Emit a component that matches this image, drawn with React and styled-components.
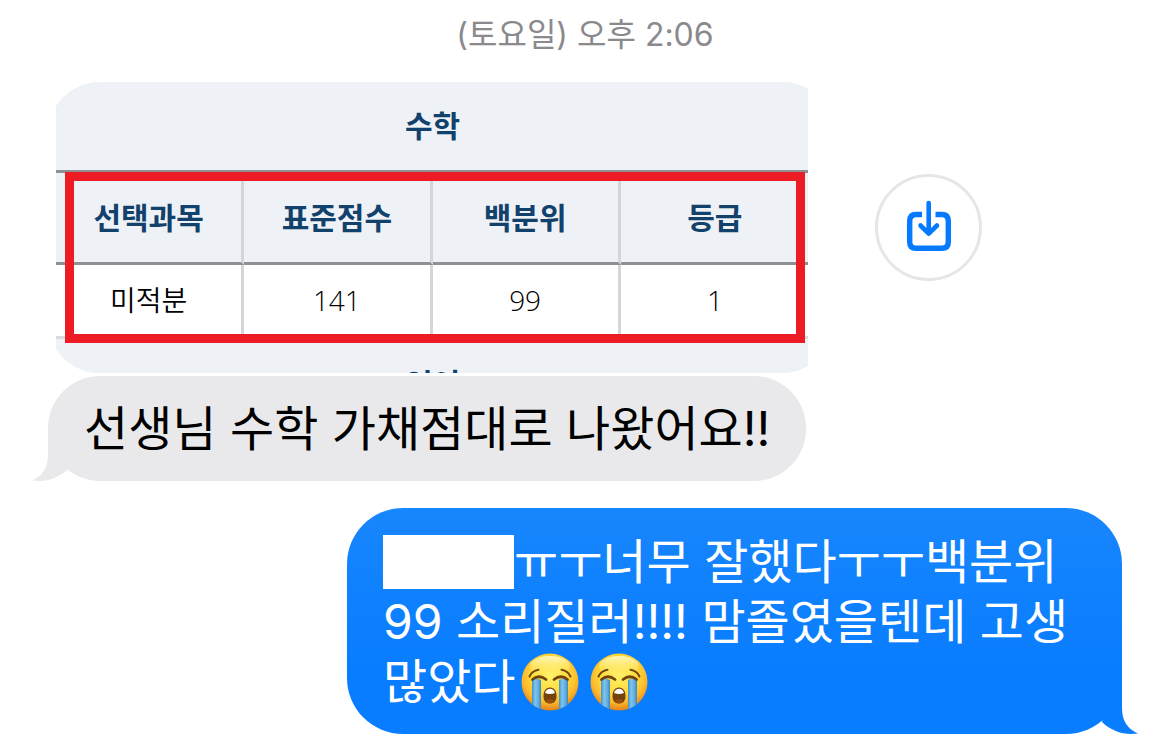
import React from 'react';
import styled, { createGlobalStyle } from 'styled-components';

const GlobalStyle = createGlobalStyle`
    * {
        box-sizing: border-box;
    }

    body {
        margin: 0;
        background: #fff;
        font-family: Inter, "Noto Sans CJK KR", sans-serif;
    }
`;

const Thread = styled.main`
    display: flex;
    flex-direction: column;
    padding: 12px 48px 0;
`;

const TimeStamp = styled.time`
    align-self: center;
    margin-bottom: 24px;
    color: #8a8a8d;
    font-size: 32px;
    line-height: 46px;
`;

const AttachmentRow = styled.div`
    display: flex;
    align-items: center;
    gap: 67px;
    padding-left: 8px;
    margin-bottom: 3px;
`;

const Attachment = styled.figure`
    position: relative;
    flex: 0 1 752px;
    margin: 0;
    overflow: hidden;
`;

// the rounded sheet is wider than the attachment, so its corners get cut off
const Sheet = styled.div`
    height: 291px;
    margin: 0 -26px 0 -8px;
    padding: 0 25px 0 8px;
    border-radius: 52px;
    background: #eef2f7;
    overflow: hidden;
`;

const ScoreTable = styled.table`
    width: 100%;
    table-layout: fixed;
    border-collapse: separate;
    border-spacing: 0;
    font-family: "Open Sans", "Noto Sans CJK KR", sans-serif;
    text-align: center;
`;

const HeadCell = styled.th`
    height: ${props => props.$height};
    padding: 0;
    background: #eef2f7;
    border-bottom: 3px solid #8e9194;
    border-right: ${props => props.$divided ? "3px solid #d3d5d8" : "0"};
    color: #12416b;
    font-size: 30px;
    font-weight: 700;
    line-height: 44px;
`;

const NextSubject = styled(HeadCell)`
    border-bottom: 0;
`;

const ScoreCell = styled.td`
    height: 74px;
    padding: 0 0 2px;
    background: #fff;
    border-bottom: 3px solid #d9dadc;
    border-right: ${props => props.$divided ? "3px solid #d3d5d8" : "0"};
    color: #000;
    font-size: 28px;
    font-weight: 350;
    line-height: 40px;
`;

const Highlight = styled.div`
    position: absolute;
    top: 90px;
    bottom: 30px;
    left: 9px;
    right: 3px;
    border: 9px solid #ed1c24;
`;

const SaveButton = styled.button`
    display: flex;
    align-items: center;
    justify-content: center;
    flex: none;
    width: 107px;
    height: 107px;
    padding: 0 0 4px;
    border: 3px solid #e6e6e8;
    border-radius: 50%;
    background: #fff;
    cursor: pointer;
`;

const Bubble = styled.div`
    position: relative;
    align-self: ${props => props.$sent ? "flex-end" : "flex-start"};
    max-width: 775px;
    margin-bottom: 27px;
    padding: ${props => props.$sent ? "24px 36px 22px" : "23px 36px 22px"};
    border-radius: ${props => props.$sent ? "56px" : "52px"};
    background: ${props => props.$sent ? "linear-gradient(#1886fd, #087dff 72%)" : "#e9e9eb"};
    color: ${props => props.$sent ? "#fff" : "#000"};
    font-size: 48px;
    line-height: 60px;
    word-break: keep-all;
`;

const BubbleText = styled.p`
    margin: 0;
`;

const Tail = styled.svg`
    position: absolute;
    bottom: 0;
    left: ${props => props.$sent ? "auto" : "-16px"};
    right: ${props => props.$sent ? "-16px" : "auto"};
    width: 36px;
    height: 60px;
    transform: ${props => props.$sent ? "scaleX(-1)" : "none"};
    fill: ${props => props.$sent ? "#087dff" : "#e9e9eb"};
`;

const HiddenName = styled.span`
    display: inline-block;
    width: 131px;
    height: 54px;
    margin: -14px 0 -6px;
    background: #fff;
    vertical-align: middle;
`;

const Emoji = styled.svg`
    width: 58px;
    height: 58px;
    margin: -14px 5px -6px 6px;
    vertical-align: middle;
`;

const BubbleTail = ({ $sent }) => (
    <Tail $sent={$sent} viewBox="0 0 36 60" aria-hidden="true">
        <path d={$sent
            ? "M16 2V34C16 46 11 55 0 59.500C14 61.500 27 57 36 48L30 22Z"
            : "M16 8V34C16 46 11 55 0 59.500C14 61.500 27 57 36 48L30 22Z"} />
    </Tail>
);

const SaveIcon = () => (
    <svg width="44" height="52" viewBox="0 0 44 52" fill="none" stroke="#067aff" aria-hidden="true">
        <path d="M15 14.500H9Q2.700 14.500 2.700 21V42Q2.700 48.300 9 48.300H35Q41.300 48.300 41.300 42V21Q41.300 14.500 35 14.500H28.500" strokeWidth="5.400" />
        <path d="M21.700 3V33M13.500 25.500L21.700 33.700L30 25.500" strokeWidth="4.600" strokeLinecap="round" strokeLinejoin="round" />
    </svg>
);

const CryingFace = ({ id }) => (
    <Emoji viewBox="0 0 58 58" role="img" aria-label="😭">
        <defs>
            <radialGradient id={`${id}-face`} cx="50%" cy="38%" r="62%">
                <stop offset="0" stopColor="#fff06a" />
                <stop offset="0.500" stopColor="#ffdc3c" />
                <stop offset="0.780" stopColor="#fbb92b" />
                <stop offset="1" stopColor="#e5801c" />
            </radialGradient>
            <linearGradient id={`${id}-shine`} x1="0" y1="0" x2="0" y2="1">
                <stop offset="0" stopColor="#fffbd0" stopOpacity="0.900" />
                <stop offset="1" stopColor="#ffe95c" stopOpacity="0" />
            </linearGradient>
            <linearGradient id={`${id}-tear`} x1="0" y1="0" x2="1" y2="0">
                <stop offset="0" stopColor="#3f93cf" />
                <stop offset="0.350" stopColor="#7fc4ee" />
                <stop offset="0.700" stopColor="#62afe0" />
                <stop offset="1" stopColor="#3f85ba" />
            </linearGradient>
            <clipPath id={`${id}-clip`}>
                <circle cx="29" cy="29" r="28.500" />
            </clipPath>
        </defs>
        <circle cx="29" cy="29" r="28.500" fill={`url(#${id}-face)`} />
        <ellipse cx="29" cy="13" rx="20" ry="10" fill={`url(#${id}-shine)`} />
        <g clipPath={`url(#${id}-clip)`}>
            <path d="M11 27Q15 24 20 27V58H11Z" fill={`url(#${id}-tear)`} />
            <path d="M38 27Q43 24 47 27V58H38Z" fill={`url(#${id}-tear)`} />
        </g>
        <g fill="none" stroke="#70450d" strokeLinecap="round">
            <path d="M8.500 23.500Q11 18 17.500 16.800M49.500 23.500Q47 18 40.500 16.800" strokeWidth="2" />
            <path d="M11.500 26.500Q18 21 25 26.500M33 26.500Q40 21 46.500 26.500" strokeWidth="2.800" />
        </g>
        <path d="M29 34.500C33 34.500 35.500 38 35.500 43C35.500 48 33 50.500 29 50.500S22.500 48 22.500 43C22.500 38 25 34.500 29 34.500Z" fill="#75410d" />
        <path d="M24 40Q25.500 35.800 29 35.800T34 40Q29 42 24 40Z" fill="#fff" />
        <ellipse cx="29" cy="48" rx="4" ry="2" fill="#95500f" />
    </Emoji>
);

const subjects = [
    { label: "선택과목", value: "미적분" },
    { label: "표준점수", value: "141" },
    { label: "백분위", value: "99" },
    { label: "등급", value: "1" },
];

const ScoreSheet = () => (
    <ScoreTable>
        <thead>
            <tr>
                <HeadCell colSpan={4} $height="91px">수학</HeadCell>
            </tr>
            <tr>
                {subjects.map((subject, i) => (
                    <HeadCell key={subject.label} $height="92px" $divided={i < 3}>{subject.label}</HeadCell>
                ))}
            </tr>
        </thead>
        <tbody>
            <tr>
                {subjects.map((subject, i) => (
                    <ScoreCell key={subject.label} $divided={i < 3}>{subject.value}</ScoreCell>
                ))}
            </tr>
            <tr>
                <NextSubject colSpan={4} $height="90px">영어</NextSubject>
            </tr>
        </tbody>
    </ScoreTable>
);

const App = () => (
    <>
        <GlobalStyle />
        <Thread>
            <TimeStamp>(토요일) 오후 2:06</TimeStamp>
            <AttachmentRow>
                <Attachment>
                    <Sheet>
                        <ScoreSheet />
                    </Sheet>
                    <Highlight />
                </Attachment>
                <SaveButton type="button" aria-label="저장">
                    <SaveIcon />
                </SaveButton>
            </AttachmentRow>
            <Bubble>
                <BubbleText>선생님 수학 가채점대로 나왔어요!!</BubbleText>
                <BubbleTail />
            </Bubble>
            <Bubble $sent>
                <BubbleText>
                    <HiddenName />ㅠㅜ너무 잘했다ㅜㅜ백분위 99 소리질러!!!! 맘졸였을텐데 고생 많았다<CryingFace id="cry-one" /><CryingFace id="cry-two" />
                </BubbleText>
                <BubbleTail $sent />
            </Bubble>
        </Thread>
    </>
);

export default App;
